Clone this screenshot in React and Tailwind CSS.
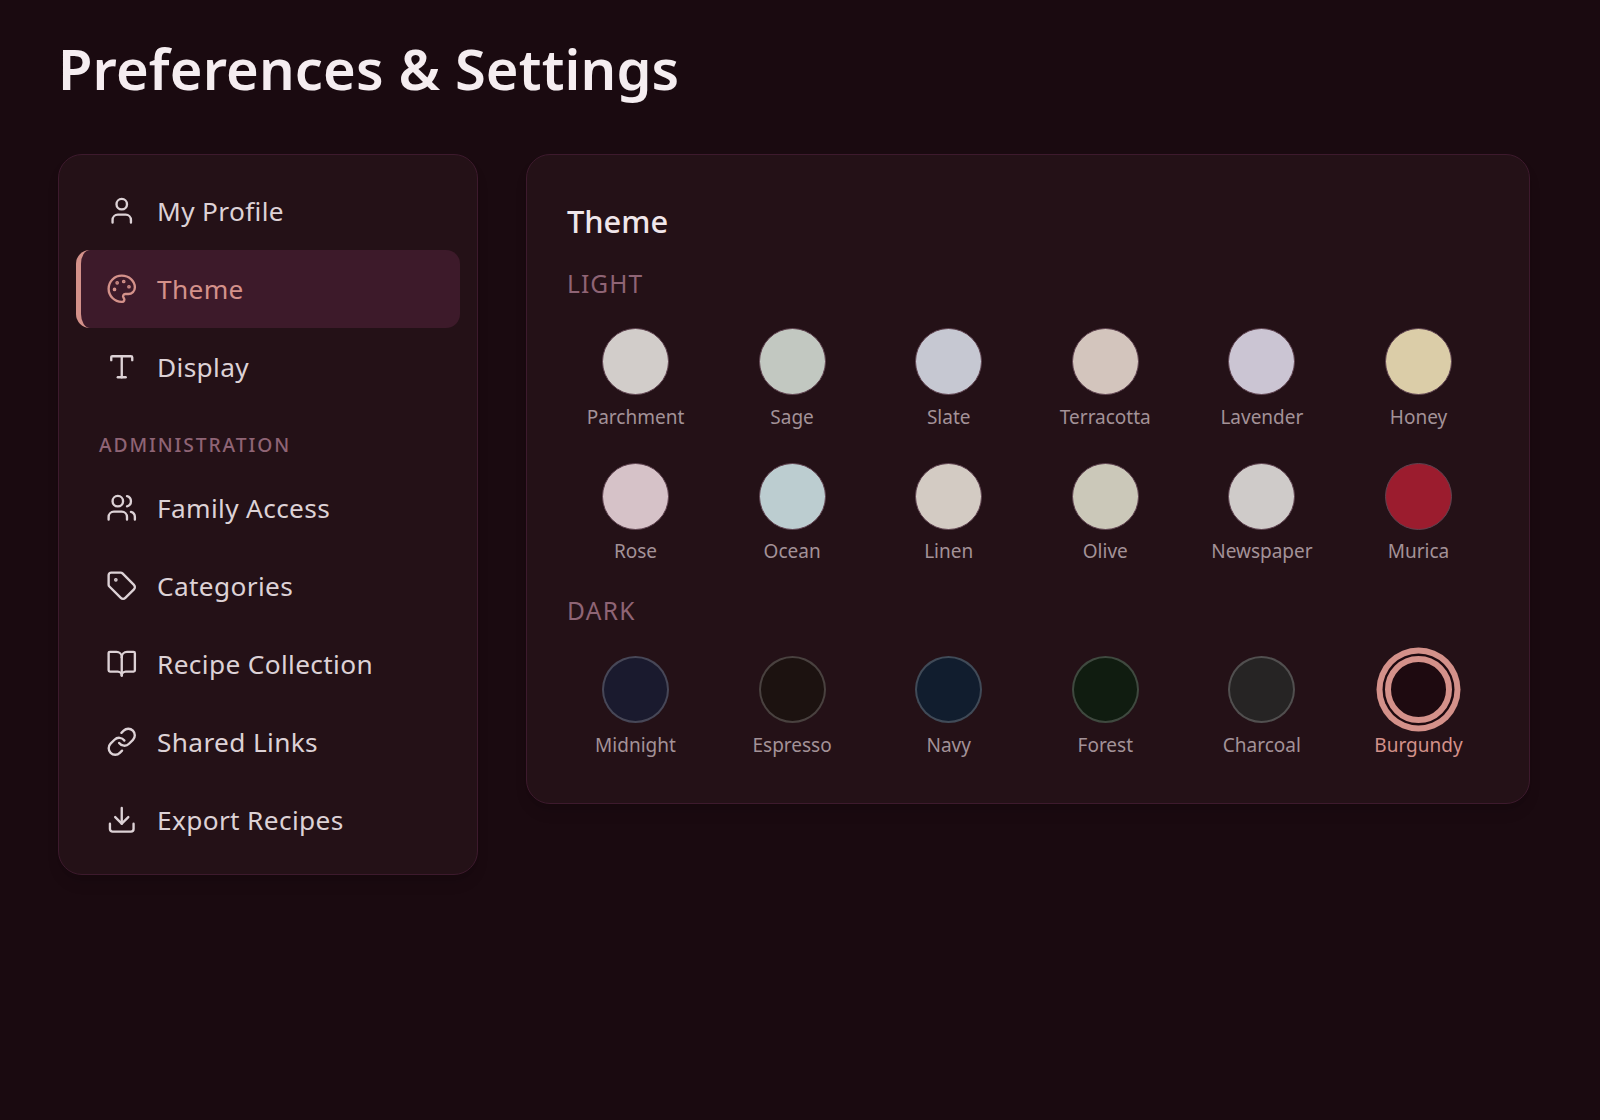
import React from "react";
import { User, Palette, Type, Users, Tag, BookOpen, Link, Download } from "lucide-react";

function NavItem({ icon: Icon, label, active }) {
  return (
    <div className={`flex items-center h-[78px] pl-[25px] gap-[20px] rounded-[14px] border-l-[5px] text-[26.25px] tracking-[0.35px] ${active ? "border-[#d4918a] bg-[#3d1a2a] text-[#d4918a]" : "border-transparent text-[#ddd2d6]"}`}>
      <Icon size={31.5} strokeWidth={1.8} />
      <span className="pt-[2px]">{label}</span>
    </div>
  );
}

function Swatch({ name, color, selected, dark }) {
  return (
    <div className="flex flex-col items-center">
      <div
        className={`w-[67px] h-[67px] rounded-full ${selected ? "border-[6px] border-[#d4918a] shadow-[0_0_0_2.5px_#1e0a10,0_0_0_8.5px_#d4918a]" : dark ? "border-[2px] border-white/20" : "border-[1.75px] border-[#5f4350]"}`}
        style={{ backgroundColor: color }}
      />
      <span className={`mt-[8.5px] text-[19px] leading-[26px] ${selected ? "text-[#d4918a]" : "text-[#a39298]"}`}>{name}</span>
    </div>
  );
}

const light = [
  ["Parchment", "#d2cdca"], ["Sage", "#c2c8c1"], ["Slate", "#c6c8d2"], ["Terracotta", "#d3c5bd"], ["Lavender", "#cbc5d3"], ["Honey", "#dbcda8"],
  ["Rose", "#d6c2c8"], ["Ocean", "#bccdd0"], ["Linen", "#d3cbc3"], ["Olive", "#cbc8b9"], ["Newspaper", "#cfcbc9"], ["Murica", "#9b1c2e"],
];
const dark = [
  ["Midnight", "#1a1a2e"], ["Espresso", "#1c1210"], ["Navy", "#111d2e"], ["Forest", "#101c10"], ["Charcoal", "#262424"], ["Burgundy", "#1e0a10", true],
];

export default function App() {
  return (
    <div className="min-h-screen bg-[#1a0a10] pl-[58px] pr-[70px] pt-[32px] font-['Noto_Sans',sans-serif]">
      <h1 className="text-[56px] leading-[72px] font-semibold tracking-[0.15px] text-[#f5edf0]">Preferences &amp; Settings</h1>
      <div className="flex items-start gap-[48px] mt-[50px]">
        <aside className="w-[420px] shrink-0 rounded-[24px] border-[1.5px] border-[#3d1a2d] bg-[#241117] pt-[17px] pb-[15px] pl-[16.5px] pr-[17.5px] shadow-lg">
          <NavItem icon={User} label="My Profile" />
          <NavItem icon={Palette} label="Theme" active />
          <NavItem icon={Type} label="Display" />
          <div className="h-[62.5px] pt-[26px] pl-[23.5px] text-[19.25px] leading-[26px] tracking-[1.9px] font-medium text-[#8f6475]">ADMINISTRATION</div>
          <NavItem icon={Users} label="Family Access" />
          <NavItem icon={Tag} label="Categories" />
          <NavItem icon={BookOpen} label="Recipe Collection" />
          <NavItem icon={Link} label="Shared Links" />
          <NavItem icon={Download} label="Export Recipes" />
        </aside>
        <main className="flex-1 rounded-[24px] border-[1.5px] border-[#3d1a2d] bg-[#241117] pl-[40px] pr-[42px] pt-[45px] pb-[45.5px] shadow-lg">
          <h2 className="text-[30.8px] leading-[42px] font-medium text-[#f0e6ea]">Theme</h2>
          <div className="mt-[26px] text-[24.5px] leading-[32px] tracking-[1.1px] text-[#8f6475]">LIGHT</div>
          <div className="grid grid-cols-6 gap-x-[19.6px] gap-y-[33.2px] mt-[28px]">
            {light.map(([n, c]) => <Swatch key={n} name={n} color={c} />)}
          </div>
          <div className="mt-[31.3px] text-[24.5px] leading-[32px] tracking-[1.3px] text-[#8f6475]">DARK</div>
          <div className="grid grid-cols-6 gap-x-[19.6px] mt-[29px]">
            {dark.map(([n, c, s]) => <Swatch key={n} name={n} color={c} selected={s} dark />)}
          </div>
        </main>
      </div>
    </div>
  );
}
